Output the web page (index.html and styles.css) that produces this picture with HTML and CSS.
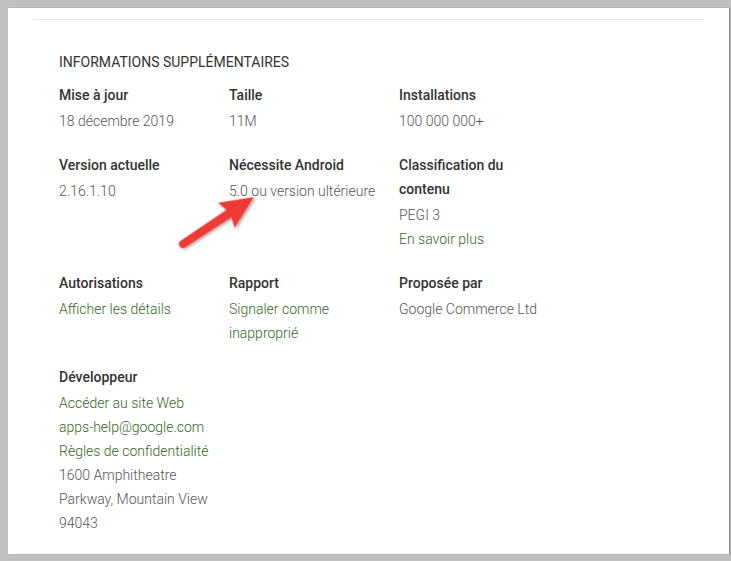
FILE: index.html
```html
<!DOCTYPE html>
<html lang="fr">
<head>
    <meta charset="UTF-8">
    <meta name="viewport" content="width=device-width, initial-scale=1.0">
    <title>Informations supplémentaires</title>
    <link rel="stylesheet" href="styles.css">
</head>
<body>

    <div class="card">
        <div class="divider"></div>

        <div class="details">
            <h2 class="details-title">INFORMATIONS SUPPLÉMENTAIRES</h2>

            <div class="details-grid">
                <div class="item">
                    <div class="item-label">Mise à jour</div>
                    <div class="item-value">18 décembre 2019</div>
                </div>
                <div class="item">
                    <div class="item-label">Taille</div>
                    <div class="item-value">11M</div>
                </div>
                <div class="item">
                    <div class="item-label">Installations</div>
                    <div class="item-value">100 000 000+</div>
                </div>

                <div class="item">
                    <div class="item-label">Version actuelle</div>
                    <div class="item-value">2.16.1.10</div>
                </div>
                <div class="item">
                    <div class="item-label">Nécessite Android</div>
                    <div class="item-value">5.0 ou version ultérieure</div>
                </div>
                <div class="item">
                    <div class="item-label">Classification du contenu</div>
                    <div class="item-value">PEGI 3</div>
                    <div class="item-value"><a href="#">En savoir plus</a></div>
                </div>

                <div class="item">
                    <div class="item-label">Autorisations</div>
                    <div class="item-value"><a href="#">Afficher les détails</a></div>
                </div>
                <div class="item">
                    <div class="item-label">Rapport</div>
                    <div class="item-value"><a href="#">Signaler comme inapproprié</a></div>
                </div>
                <div class="item">
                    <div class="item-label">Proposée par</div>
                    <div class="item-value">Google Commerce Ltd</div>
                </div>

                <div class="item">
                    <div class="item-label">Développeur</div>
                    <div class="item-value"><a href="#">Accéder au site Web</a></div>
                    <div class="item-value"><a href="#">apps-help@google.com</a></div>
                    <div class="item-value"><a href="#">Règles de confidentialité</a></div>
                    <div class="item-value">1600 Amphitheatre Parkway, Mountain View 94043</div>
                </div>
            </div>
        </div>

        <!-- Red annotation arrow pointing at the Android version -->
        <svg class="arrow" width="110" height="80" viewBox="0 0 110 80">
            <defs>
                <filter id="arrowShadow" x="-30%" y="-30%" width="160%" height="160%">
                    <feDropShadow dx="1" dy="2" stdDeviation="1.5" flood-color="#000" flood-opacity="0.35"/>
                </filter>
            </defs>
            <g transform="translate(11 63) rotate(-33.5)" filter="url(#arrowShadow)">
                <path d="M0 -4 L55 -4.5 L52 -15 L85 0 L52 15 L55 4.5 L0 4 A4 4 0 0 1 0 -4 Z" fill="#ef3b36"/>
            </g>
        </svg>
    </div>

</body>
</html>
```

FILE: styles.css
```css
body {
    margin: 0;
    padding: 8px 2px 7px 8px;
    background-color: #c0c0c0;
    font-family: Roboto, "Liberation Sans", Arial, sans-serif;
    height: 561px;
    box-sizing: border-box;
    overflow: hidden;
}
.card {
    position: relative;
    height: 546px;
    background-color: #fff;
    box-shadow: 1px 0 1px rgba(0, 0, 0, 0.25);
    padding-top: 11px;
    box-sizing: border-box;
}
.divider {
    height: 1px;
    margin: 0 25px;
    background-color: #e3e3e3;
}
.details {
    padding: 30px 0 0 51px;
}
.details-title {
    margin: 0 0 9px 0;
    font-size: 14px;
    font-weight: 400;
    line-height: 24px;
    color: #333;
}
.details-grid {
    display: grid;
    grid-template-columns: repeat(3, 156px);
    column-gap: 14px;
    row-gap: 20px;
}
.item-label {
    font-size: 14px;
    font-weight: 500;
    line-height: 24px;
    color: #333;
    margin-bottom: 2px;
}
.item-value {
    font-size: 14px;
    font-weight: 300;
    line-height: 24px;
    color: #555;
}
.item-value a {
    color: #33691e;
    text-decoration: none;
}
/* Annotation overlay */
.arrow {
    position: absolute;
    left: 164px;
    top: 173px;
    overflow: visible;
}
```
